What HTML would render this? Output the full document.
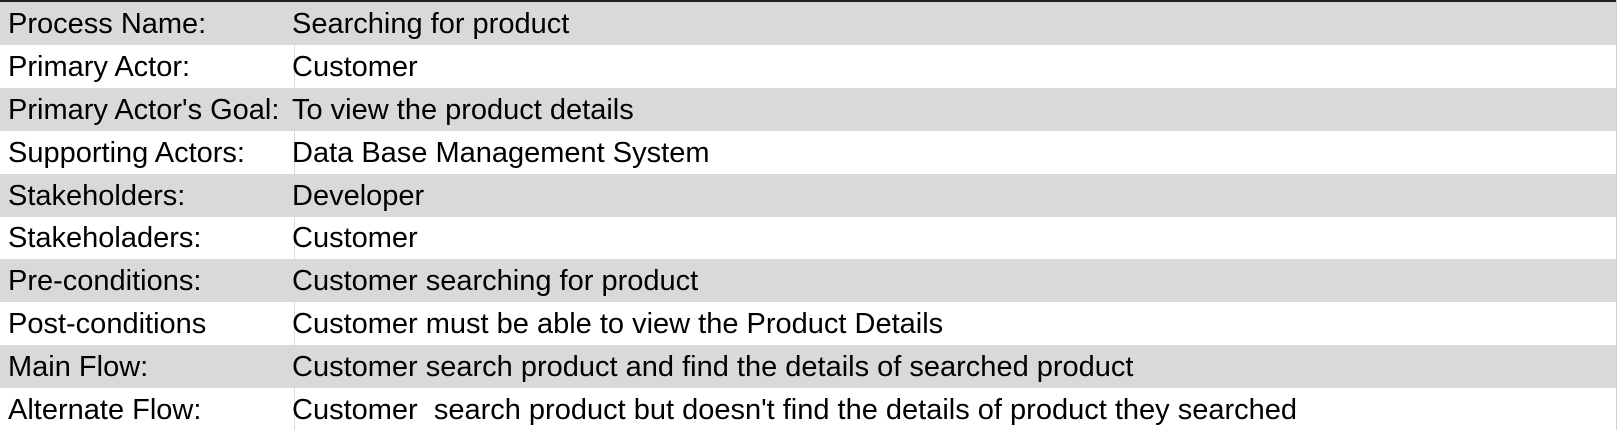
<!DOCTYPE html>
<html><head><meta charset="utf-8"><style>
html,body{margin:0;padding:0;background:#fff;}
body{width:1617px;height:430px;overflow:hidden;position:relative;font-family:"Liberation Sans",Arial,sans-serif;font-size:29px;color:#000;}
.top{position:absolute;left:0;top:0;width:1617px;height:2px;background:#222;}
.r{position:absolute;left:0;width:1616px;height:43px;}
.g{background:#d9d9d9;}
.r span{position:absolute;top:6px;white-space:pre;}
.a{left:8px;}
.b{left:292px;}
.div{position:absolute;left:294px;top:2px;width:1px;height:428px;background:#dadada;}
.rt{position:absolute;left:1616px;top:0;width:1px;height:430px;background:#d0d0d0;}
</style></head><body>
<div class="div"></div>
<div class="r g" style="top:2px"><span class="a">Process Name:</span><span class="b">Searching for product</span></div>
<div class="r" style="top:45px"><span class="a">Primary Actor:</span><span class="b">Customer</span></div>
<div class="r g" style="top:88px"><span class="a">Primary Actor's Goal:</span><span class="b">To view the product details</span></div>
<div class="r" style="top:131px"><span class="a">Supporting Actors:</span><span class="b">Data Base Management System</span></div>
<div class="r g" style="top:174px"><span class="a">Stakeholders:</span><span class="b">Developer</span></div>
<div class="r" style="top:216px"><span class="a">Stakeholaders:</span><span class="b">Customer</span></div>
<div class="r g" style="top:259px"><span class="a">Pre-conditions:</span><span class="b">Customer searching for product</span></div>
<div class="r" style="top:302px"><span class="a">Post-conditions</span><span class="b">Customer must be able to view the Product Details</span></div>
<div class="r g" style="top:345px"><span class="a">Main Flow:</span><span class="b">Customer search product and find the details of searched product</span></div>
<div class="r" style="top:388px"><span class="a">Alternate Flow:</span><span class="b">Customer  search product but doesn't find the details of product they searched</span></div>
<div class="top"></div>
<div class="rt"></div>
</body></html>
